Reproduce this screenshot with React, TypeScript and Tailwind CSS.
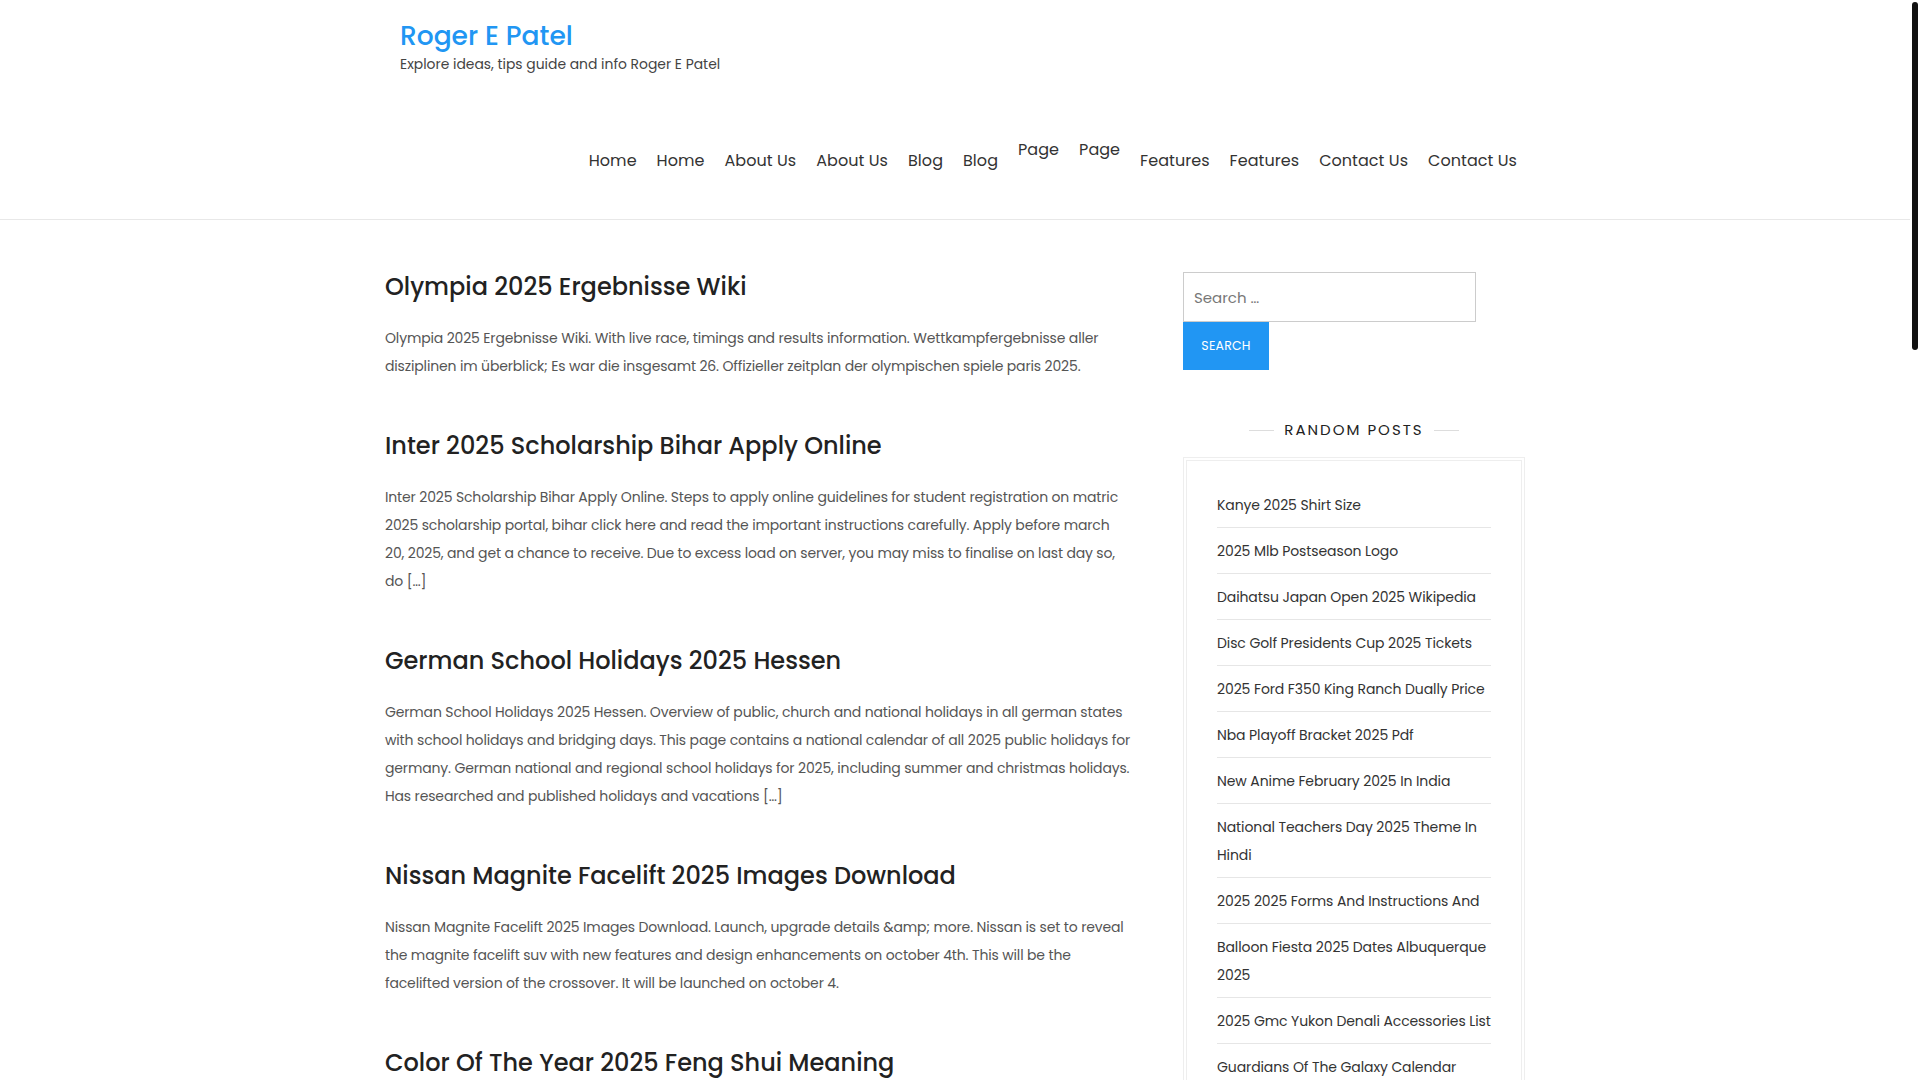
import React from 'react';

const FONT = "font-['Poppins','Inter','Noto_Sans',sans-serif]";

const NAV_ITEMS: { label: string; raised?: boolean }[] = [
  { label: 'Home' },
  { label: 'Home' },
  { label: 'About Us' },
  { label: 'About Us' },
  { label: 'Blog' },
  { label: 'Blog' },
  { label: 'Page', raised: true },
  { label: 'Page', raised: true },
  { label: 'Features' },
  { label: 'Features' },
  { label: 'Contact Us' },
  { label: 'Contact Us' },
];

const POSTS = [
  {
    title: 'Olympia 2025 Ergebnisse Wiki',
    body: 'Olympia 2025 Ergebnisse Wiki. With live race, timings and results information. Wettkampfergebnisse aller disziplinen im überblick; Es war die insgesamt 26. Offizieller zeitplan der olympischen spiele paris 2025.',
  },
  {
    title: 'Inter 2025 Scholarship Bihar Apply Online',
    body: 'Inter 2025 Scholarship Bihar Apply Online. Steps to apply online guidelines for student registration on matric 2025 scholarship portal, bihar click here and read the important instructions carefully. Apply before march 20, 2025, and get a chance to receive. Due to excess load on server, you may miss to finalise on last day so, do […]',
  },
  {
    title: 'German School Holidays 2025 Hessen',
    body: 'German School Holidays 2025 Hessen. Overview of public, church and national holidays in all german states with school holidays and bridging days. This page contains a national calendar of all 2025 public holidays for germany. German national and regional school holidays for 2025, including summer and christmas holidays. Has researched and published holidays and vacations […]',
  },
  {
    title: 'Nissan Magnite Facelift 2025 Images Download',
    body: 'Nissan Magnite Facelift 2025 Images Download. Launch, upgrade details &amp; more. Nissan is set to reveal the magnite facelift suv with new features and design enhancements on october 4th. This will be the facelifted version of the crossover. It will be launched on october 4.',
  },
  {
    title: 'Color Of The Year 2025 Feng Shui Meaning',
    body: 'Color Of The Year 2025 Feng Shui Meaning. Find out which shades bring balance, luck and harmony to your home in the coming year, and how to use them […]',
  },
];

const RANDOM_POSTS = [
  'Kanye 2025 Shirt Size',
  '2025 Mlb Postseason Logo',
  'Daihatsu Japan Open 2025 Wikipedia',
  'Disc Golf Presidents Cup 2025 Tickets',
  '2025 Ford F350 King Ranch Dually Price',
  'Nba Playoff Bracket 2025 Pdf',
  'New Anime February 2025 In India',
  'National Teachers Day 2025 Theme In Hindi',
  '2025 2025 Forms And Instructions And',
  'Balloon Fiesta 2025 Dates Albuquerque 2025',
  '2025 Gmc Yukon Denali Accessories List',
  'Guardians Of The Galaxy Calendar 2025',
];

function Header() {
  return (
    <header className="border-b border-[#e8e8e8]">
      <div className="mx-auto w-[1140px] h-[219px] flex flex-col">
        <div className="pl-[15px] pt-[19px]">
          <a className="block text-[26.5px] leading-[34px] font-medium text-[#2196f3]">Roger E Patel</a>
          <p className="text-[13.9px] leading-[22px] text-[#444]">Explore ideas, tips guide and info Roger E Patel</p>
        </div>
        <nav className="mt-[55px] flex items-center justify-end gap-[20px] pr-[8px]">
          {NAV_ITEMS.map((item, i) => (
            <a
              key={i}
              className={`text-[16px] leading-[40px] tracking-[0.05px] text-[#333] ${item.raised ? 'mb-[22px]' : ''}`}
            >
              {item.label}
            </a>
          ))}
        </nav>
      </div>
    </header>
  );
}

function PostList() {
  return (
    <main className="w-[746px] pt-[50px]">
      {POSTS.map((post, i) => (
        <article key={i} className="mb-[49px]">
          <h2 className="text-[24px] leading-[34px] font-medium text-[#222] mb-[20px]">{post.title}</h2>
          <p className="text-[14px] leading-[28px] tracking-[-0.15px] text-[#555]">{post.body}</p>
        </article>
      ))}
    </main>
  );
}

function Sidebar() {
  return (
    <aside className="w-[342px] pt-[52px]">
      <form className="flex flex-col items-start">
        <input
          type="search"
          placeholder="Search …"
          className="w-[293px] h-[50px] border border-[#ccc] px-[10px] text-[15px] text-[#333] placeholder:text-[#777] outline-none"
        />
        <button
          type="button"
          className="w-[86px] h-[48px] bg-[#2196f3] text-white text-[12.5px] uppercase tracking-[0.2px]"
        >
          Search
        </button>
      </form>

      <div className="mt-[48px] flex items-center justify-center gap-[10px]">
        <span className="w-[25px] h-px bg-[#ddd]" />
        <h3 className="text-[15px] leading-[24px] tracking-[2px] text-[#222] uppercase">Random Posts</h3>
        <span className="w-[25px] h-px bg-[#ddd]" />
      </div>

      <div className="mt-[15px] border border-[#eee] p-[2px]">
        <ul className="border border-[#eee] px-[30px] pt-[21px] pb-[20px]">
          {RANDOM_POSTS.map((title, i) => (
            <li key={i} className="pt-[9px] pb-[8px] border-b border-[#e6e6e6]">
              <a className="text-[14px] leading-[28px] tracking-[-0.1px] text-[#333]">{title}</a>
            </li>
          ))}
        </ul>
      </div>
    </aside>
  );
}

function ScrollRail() {
  return (
    <div className="w-[10px] shrink-0 bg-white pt-[2px] px-[2px]">
      <div className="h-[348px] rounded-full bg-[#111]" />
    </div>
  );
}

export default function App() {
  return (
    <div className={`${FONT} h-screen w-full overflow-hidden bg-white flex`}>
      <div className="flex-1 min-w-0">
        <Header />
        <div className="mx-auto w-[1140px] flex justify-between">
          <PostList />
          <Sidebar />
        </div>
      </div>
      <ScrollRail />
    </div>
  );
}
